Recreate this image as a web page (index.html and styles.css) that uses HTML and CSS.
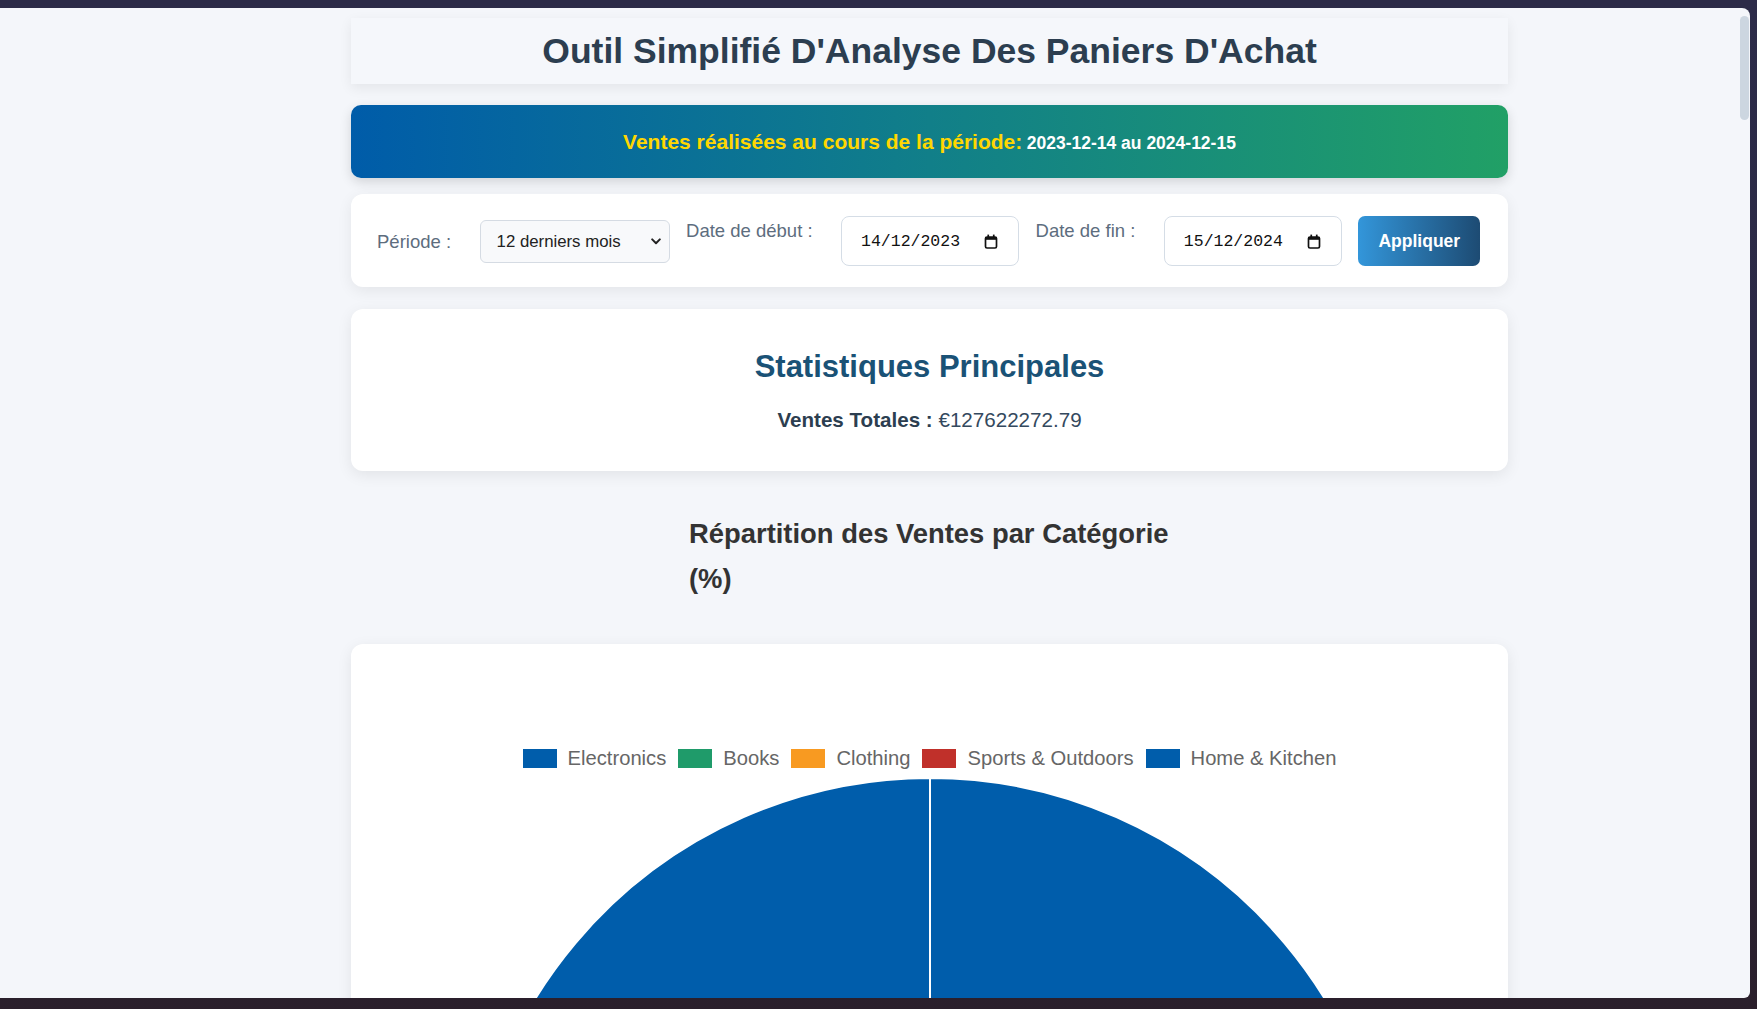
FILE: index.html
```html
<!DOCTYPE html>
<html lang="fr">
<head>
<meta charset="utf-8">
<title>Outil Simplifié D'Analyse Des Paniers D'Achat</title>
<link rel="stylesheet" href="styles.css">
</head>
<body>
<div class="window">
  <div class="scroll-thumb"></div>
  <div class="page">
    <div class="container">
      <header class="title-card">
        <h1>Outil Simplifié D'Analyse Des Paniers D'Achat</h1>
      </header>

      <div class="banner">
        <span class="banner-label">Ventes réalisées au cours de la période:</span>
        <span class="banner-dates">2023-12-14 au 2024-12-15</span>
      </div>

      <div class="filters">
        <label class="f-label">Période :</label>
        <div class="select-wrap">
          <select class="select"><option>12 derniers mois</option></select>
          <svg class="chev" viewBox="0 0 10 7" width="10" height="7"><path d="M1.2 1.4 L5 5.2 L8.8 1.4" fill="none" stroke="#222" stroke-width="2" stroke-linecap="round" stroke-linejoin="round"/></svg>
        </div>
        <label class="f-label f-top">Date de début :</label>
        <div class="date-box">
          <span>14/12/2023</span>
          <svg class="cal" viewBox="0 0 14 15" width="14" height="15"><rect x="1.5" y="3" width="11" height="11" rx="1.5" fill="none" stroke="#111" stroke-width="1.7"/><rect x="1.5" y="3" width="11" height="2.8" fill="#111"/><rect x="3.4" y="0.6" width="1.7" height="3" fill="#111"/><rect x="8.9" y="0.6" width="1.7" height="3" fill="#111"/></svg>
        </div>
        <label class="f-label f-top">Date de fin :</label>
        <div class="date-box">
          <span>15/12/2024</span>
          <svg class="cal" viewBox="0 0 14 15" width="14" height="15"><rect x="1.5" y="3" width="11" height="11" rx="1.5" fill="none" stroke="#111" stroke-width="1.7"/><rect x="1.5" y="3" width="11" height="2.8" fill="#111"/><rect x="3.4" y="0.6" width="1.7" height="3" fill="#111"/><rect x="8.9" y="0.6" width="1.7" height="3" fill="#111"/></svg>
        </div>
        <button class="btn">Appliquer</button>
      </div>

      <section class="stats">
        <h2 class="stats-title">Statistiques Principales</h2>
        <p class="total"><strong>Ventes Totales :</strong> <span class="total-value">€127622272.79</span></p>
      </section>

      <div class="chart-head">
        <h2 class="chart-title">Répartition des Ventes par Catégorie (%)</h2>
      </div>

      <section class="chart-card">
        <ul class="legend">
          <li class="legend-item"><span class="swatch sw-elec"></span>Electronics</li>
          <li class="legend-item"><span class="swatch sw-books"></span>Books</li>
          <li class="legend-item"><span class="swatch sw-cloth"></span>Clothing</li>
          <li class="legend-item"><span class="swatch sw-sports"></span>Sports &amp; Outdoors</li>
          <li class="legend-item"><span class="swatch sw-home"></span>Home &amp; Kitchen</li>
        </ul>
        <svg class="pie" viewBox="0 0 926 926" width="926" height="926">
          <g stroke="#fff" stroke-width="2" stroke-linejoin="round">
            <path d="M463 463 L463 0 A463 463 0 0 1 919 543.4 Z" fill="#005dab"/>
            <path d="M463 463 L919 543.4 A463 463 0 0 1 543.4 919 Z" fill="#1f9b6a"/>
            <path d="M463 463 L543.4 919 A463 463 0 0 1 165.4 817.7 Z" fill="#f89a21"/>
            <path d="M463 463 L165.4 817.7 A463 463 0 0 1 7 543.4 Z" fill="#c0302a"/>
            <path d="M463 463 L7 543.4 A463 463 0 0 1 463 0 Z" fill="#005dab"/>
          </g>
        </svg>
      </section>
    </div>
  </div>
</div>
</body>
</html>
```

FILE: styles.css
```css
* { box-sizing: border-box; }

html, body {
  margin: 0;
  height: 100%;
}

body {
  overflow: hidden;
  background: linear-gradient(180deg, #2c2b48 0%, #2b2843 55%, #2a1f2b 100%);
  font-family: "Liberation Sans", Arial, sans-serif;
}

.window {
  position: relative;
  margin-top: 8px;
  width: 1750px;
  height: 990px;
  background: #f4f6fa;
  border-radius: 0 8px 6px 0;
  overflow: hidden;
}

.scroll-thumb {
  position: absolute;
  top: 8px;
  right: 1px;
  width: 9px;
  height: 104px;
  border-radius: 5px;
  background: #ccd6e0;
  z-index: 2;
}

.page {
  padding: 10px 0 0 351px;
}

.container {
  width: 1157px;
}

.title-card {
  background: #f5f7fb;
  box-shadow: 0 4px 12px rgba(0, 0, 0, 0.07);
  padding: 13px 0;
  text-align: center;
}

.title-card h1 {
  margin: 0;
  font-size: 35.5px;
  line-height: 40px;
  font-weight: 700;
  color: #2c3e50;
}

.banner {
  margin-top: 21px;
  padding: 24px 20px 21px;
  line-height: 26px;
  text-align: center;
  border-radius: 10px;
  background: linear-gradient(90deg, #005ca9 0%, #117f89 50%, #21a066 100%);
  box-shadow: 0 4px 12px rgba(0, 0, 0, 0.14);
}

.banner-label {
  color: #ffd700;
  font-weight: 700;
  font-size: 21px;
}

.banner-dates {
  color: #fff;
  font-weight: 700;
  font-size: 17.5px;
}

.filters {
  margin-top: 16px;
  background: #fff;
  border-radius: 12px;
  box-shadow: 0 4px 15px rgba(0, 0, 0, 0.07);
  padding: 22px 20px 21px 26px;
  display: flex;
  align-items: center;
  gap: 16.5px;
}

.filters > * {
  flex-shrink: 0;
}

.f-label {
  font-size: 18.5px;
  line-height: 21px;
  color: #5d6d7e;
  margin-right: 12px;
  white-space: nowrap;
}

.f-top {
  align-self: flex-start;
  margin-top: 4px;
}

.select-wrap {
  position: relative;
  width: 190px;
  height: 43px;
}

.select {
  appearance: none;
  -webkit-appearance: none;
  width: 100%;
  height: 100%;
  border: 1px solid #d5dbe3;
  border-radius: 6px;
  background: #f8f9fb;
  font-family: "Liberation Sans", Arial, sans-serif;
  font-size: 16.8px;
  color: #222;
  padding: 0 0 0 16px;
}

.chev {
  position: absolute;
  right: 9px;
  top: 18px;
  pointer-events: none;
}

.date-box {
  width: 178px;
  height: 50px;
  border: 1px solid #d5dde6;
  border-radius: 8px;
  background: #fff;
  display: flex;
  align-items: center;
  justify-content: space-between;
  padding: 1px 20px 0 19px;
  font-family: "Liberation Mono", monospace;
  font-size: 16.5px;
  color: #111;
}

.cal { display: block; }

.btn {
  width: 122px;
  height: 50px;
  border: 0;
  border-radius: 7px;
  background: linear-gradient(90deg, #3396da 0%, #1d4b73 100%);
  color: #fff;
  font-family: "Liberation Sans", Arial, sans-serif;
  font-weight: 700;
  font-size: 17.5px;
}

.stats {
  margin-top: 22px;
  background: #fff;
  border-radius: 12px;
  box-shadow: 0 4px 15px rgba(0, 0, 0, 0.08);
  padding: 39px 0 39px;
  text-align: center;
}

.stats-title {
  margin: 0;
  font-size: 31px;
  line-height: 37px;
  font-weight: 700;
  color: #1a5276;
}

.total {
  margin: 23px 0 0;
  font-size: 20.6px;
  line-height: 24px;
  color: #2c3e50;
}

.total-value { color: #34495e; }

.chart-head {
  margin: 40px 0 0 338px;
  width: 495px;
}

.chart-title {
  margin: 0;
  font-size: 27.4px;
  line-height: 45px;
  font-weight: 700;
  color: #333;
  text-align: left;
}

.chart-card {
  margin-top: 43px;
  background: #fff;
  border-radius: 12px;
  box-shadow: 0 4px 15px rgba(0, 0, 0, 0.08);
  padding: 103px 0 40px;
}

.legend {
  list-style: none;
  margin: 0;
  padding: 0;
  display: flex;
  justify-content: center;
  align-items: center;
  gap: 12px;
  height: 23px;
}

.legend-item {
  display: flex;
  align-items: center;
  gap: 11px;
  font-size: 20.2px;
  line-height: 23px;
  color: #666;
}

.swatch {
  display: block;
  width: 34px;
  height: 19px;
}

.sw-elec { background: #005dab; }
.sw-books { background: #1f9b6a; }
.sw-cloth { background: #f89a21; }
.sw-sports { background: #c0302a; }
.sw-home { background: #005dab; }

.pie {
  display: block;
  margin: 8px auto 0;
}
```
